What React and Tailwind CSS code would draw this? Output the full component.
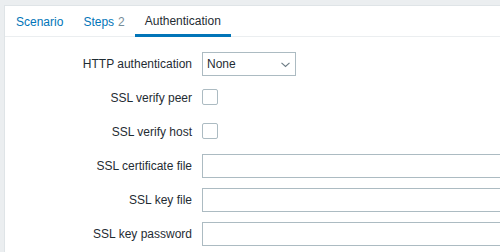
import React from "react";

function Row({ label, children }) {
  return (
    <div className="flex h-[24px] mb-[10px]">
      <div className="w-[187px] shrink-0 text-right leading-[24px] text-[#1f2c33]">{label}</div>
      <div className="ml-[10px] flex items-start">{children}</div>
    </div>
  );
}

export default function App() {
  return (
    <div
      className="w-[500px] h-[252px] overflow-hidden bg-[#ebeef0] pt-[5px] pl-[4px] text-[12px]"
      style={{ fontFamily: '"Liberation Sans", Arial, sans-serif' }}
    >
      <div className="bg-white border-t border-l border-[#dfe4e7] h-full w-[600px]">
        <div className="flex border-b border-[#ebeef0] h-[31px] pl-px">
          <div className="h-[31px] px-[10px] flex items-center pt-px text-[#0275b8]">Scenario</div>
          <div className="h-[31px] px-[10px] flex items-center pt-px text-[#0275b8]">
            Steps<span className="ml-[4px] text-[#768d99]">2</span>
          </div>
          <div className="h-[31px] px-[10px] flex items-center pt-px text-[#1f2c33] border-b-[3px] border-[#0275b8] mb-[-1px]">
            Authentication
          </div>
        </div>
        <div className="pt-[15px]">
          <Row label="HTTP authentication">
            <div className="w-[94px] h-[24px] border border-[#acbbc2] pl-[4px] pr-[5px] flex items-center justify-between text-[#1f2c33]">
              <span>None</span>
              <svg width="9" height="6" viewBox="0 0 9 6" className="mt-[1px]">
                <path d="M0.5 0.8 L4.5 4.5 L8.5 0.8" fill="none" stroke="#6b7b84" strokeWidth="1.1" />
              </svg>
            </div>
          </Row>
          <Row label="SSL verify peer">
            <div className="mt-[3px] w-[16px] h-[16px] border border-[#acbbc2] rounded-[2px] bg-white" />
          </Row>
          <Row label="SSL verify host">
            <div className="mt-[3px] w-[16px] h-[16px] border border-[#acbbc2] rounded-[2px] bg-white" />
          </Row>
          <Row label="SSL certificate file">
            <div className="w-[400px] h-[24px] border border-[#acbbc2] bg-white" />
          </Row>
          <Row label="SSL key file">
            <div className="w-[400px] h-[24px] border border-[#acbbc2] bg-white" />
          </Row>
          <Row label="SSL key password">
            <div className="w-[400px] h-[24px] border border-[#acbbc2] bg-white" />
          </Row>
        </div>
      </div>
    </div>
  );
}
